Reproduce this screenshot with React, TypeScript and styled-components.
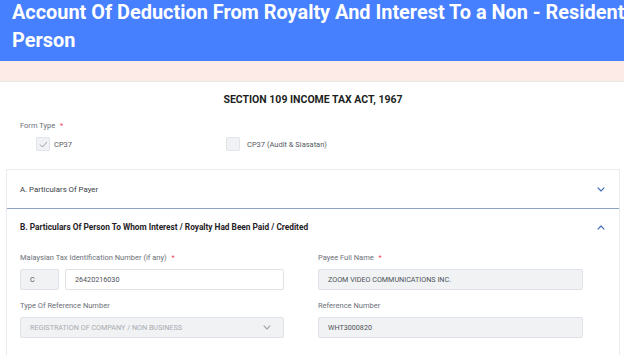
import styled, { createGlobalStyle } from 'styled-components'

const GlobalStyle = createGlobalStyle`
  body {
    margin: 0;
    font-family: Roboto, 'Open Sans', sans-serif;
    background: #ffffff;
    overflow: hidden;
  }
`

function Chevron({ up, color = '#3f6bb5' }: { up?: boolean; color?: string }) {
  return (
    <svg width="8" height="5" viewBox="0 0 8 5" fill="none">
      <path
        d={up ? 'M1 4.2 L4 1 L7 4.2' : 'M1 0.8 L4 4 L7 0.8'}
        stroke={color}
        strokeWidth="1.1"
        strokeLinecap="round"
        strokeLinejoin="round"
      />
    </svg>
  )
}

function Check() {
  return (
    <svg width="9" height="7" viewBox="0 0 9 7" fill="none">
      <path d="M1 3.6 L3.4 6 L8 1" stroke="#9aa0a8" strokeWidth="1" />
    </svg>
  )
}

function App() {
  return (
    <>
      <GlobalStyle />
      <Header>
        <Title>Account Of Deduction From Royalty And Interest To a Non - Resident Person</Title>
      </Header>
      <Band />
      <Main>
        <SectionTitle>SECTION 109 INCOME TAX ACT, 1967</SectionTitle>
        <FormType>
          <Label>
            Form Type <Req>*</Req>
          </Label>
          <CheckRow>
            <CheckItem>
              <Box>
                <Check />
              </Box>
              CP37
            </CheckItem>
            <CheckItem>
              <Box />
              CP37 (Audit &amp; Siasatan)
            </CheckItem>
          </CheckRow>
        </FormType>
        <Card>
          <CardHeader>
            <CardTitle>A. Particulars Of Payer</CardTitle>
            <Chevron />
          </CardHeader>
          <CardHeader $open>
            <CardTitle $bold>B. Particulars Of Person To Whom Interest / Royalty Had Been Paid / Credited</CardTitle>
            <Chevron up />
          </CardHeader>
          <Fields>
            <Field>
              <Label>
                Malaysian Tax Identification Number (if any) <Req>*</Req>
              </Label>
              <InputRow>
                <Input $disabled $width="39px">C</Input>
                <Input>26420216030</Input>
              </InputRow>
            </Field>
            <Field>
              <Label>
                Payee Full Name <Req>*</Req>
              </Label>
              <Input $disabled>ZOOM VIDEO COMMUNICATIONS INC.</Input>
            </Field>
            <Field>
              <Label>Type Of Reference Number</Label>
              <Input $disabled $muted>
                REGISTRATION OF COMPANY / NON BUSINESS
                <Chevron color="#9ea3aa" />
              </Input>
            </Field>
            <Field>
              <Label>Reference Number</Label>
              <Input $disabled>WHT3000820</Input>
            </Field>
          </Fields>
        </Card>
      </Main>
    </>
  )
}

const Header = styled.div`
  background: #4680ff;
  height: 61px;
  padding: 0 0 0 12px;
  box-sizing: border-box;
  overflow: hidden;
`

const Title = styled.h1`
  margin: -1px 0 0;
  width: 640px;
  color: #ffffff;
  font-family: Roboto, sans-serif;
  font-size: 19.9px;
  font-weight: 700;
  line-height: 28px;
`

const Band = styled.div`
  height: 20px;
  background: #fdebe8;
  border-bottom: 1px solid #e6e6e6;
`

const Main = styled.div`
  padding: 0 4px 0 6px;
`

const SectionTitle = styled.div`
  text-align: center;
  margin-top: 12px;
  font-size: 10.5px;
  font-weight: 700;
  line-height: 12px;
  color: #1d1f22;
`

const FormType = styled.div`
  padding: 15px 0 0 14px;
`

const Label = styled.div`
  font-size: 7.5px;
  line-height: 10px;
  color: #6b7078;
  margin-bottom: 6px;
`

const Req = styled.span`
  color: #f0465a;
  margin-left: 3px;
`

const CheckRow = styled.div`
  display: flex;
  padding-left: 16px;
`

const CheckItem = styled.div`
  display: flex;
  align-items: center;
  gap: 4px;
  width: 190px;
  font-size: 7.5px;
  color: #555a61;

  & + & {
    gap: 7px;
  }
`

const Box = styled.div`
  width: 12px;
  height: 12px;
  border: 1px solid #e1e4e8;
  background: #f1f2f5;
  border-radius: 2px;
  display: flex;
  align-items: center;
  justify-content: center;
`

const Card = styled.div`
  margin-top: 18px;
  border: 1px solid #e9ebee;
  border-bottom: none;
`

const CardHeader = styled.div<{ $open?: boolean }>`
  display: flex;
  align-items: center;
  justify-content: space-between;
  height: ${(p) => (p.$open ? '36px' : '38px')};
  padding: 0 14px 0 13px;
  border-top: ${(p) => (p.$open ? '1.5px solid #8ea3c6' : 'none')};
`

const CardTitle = styled.div<{ $bold?: boolean }>`
  font-size: ${(p) => (p.$bold ? '8.3px' : '7.8px')};
  font-weight: ${(p) => (p.$bold ? 700 : 400)};
  color: ${(p) => (p.$bold ? '#1f2227' : '#3a3e44')};
`

const Fields = styled.div`
  display: grid;
  grid-template-columns: 264px 265px;
  column-gap: 34px;
  row-gap: 11px;
  padding: 8px 0 20px 13px;
`

const Field = styled.div``

const InputRow = styled.div`
  display: flex;
  gap: 6px;
`

const Input = styled.div<{ $disabled?: boolean; $muted?: boolean; $width?: string }>`
  flex: ${(p) => (p.$width ? `0 0 ${p.$width}` : '1')};
  box-sizing: border-box;
  height: 21px;
  display: flex;
  align-items: center;
  justify-content: space-between;
  padding: 0 12px 0 9px;
  border: 1px solid #dfe2e6;
  border-radius: 2px;
  background: ${(p) => (p.$disabled ? '#f1f2f4' : '#ffffff')};
  font-size: 7.2px;
  color: ${(p) => (p.$muted ? '#a7abb1' : '#4d5259')};
`

export default App
